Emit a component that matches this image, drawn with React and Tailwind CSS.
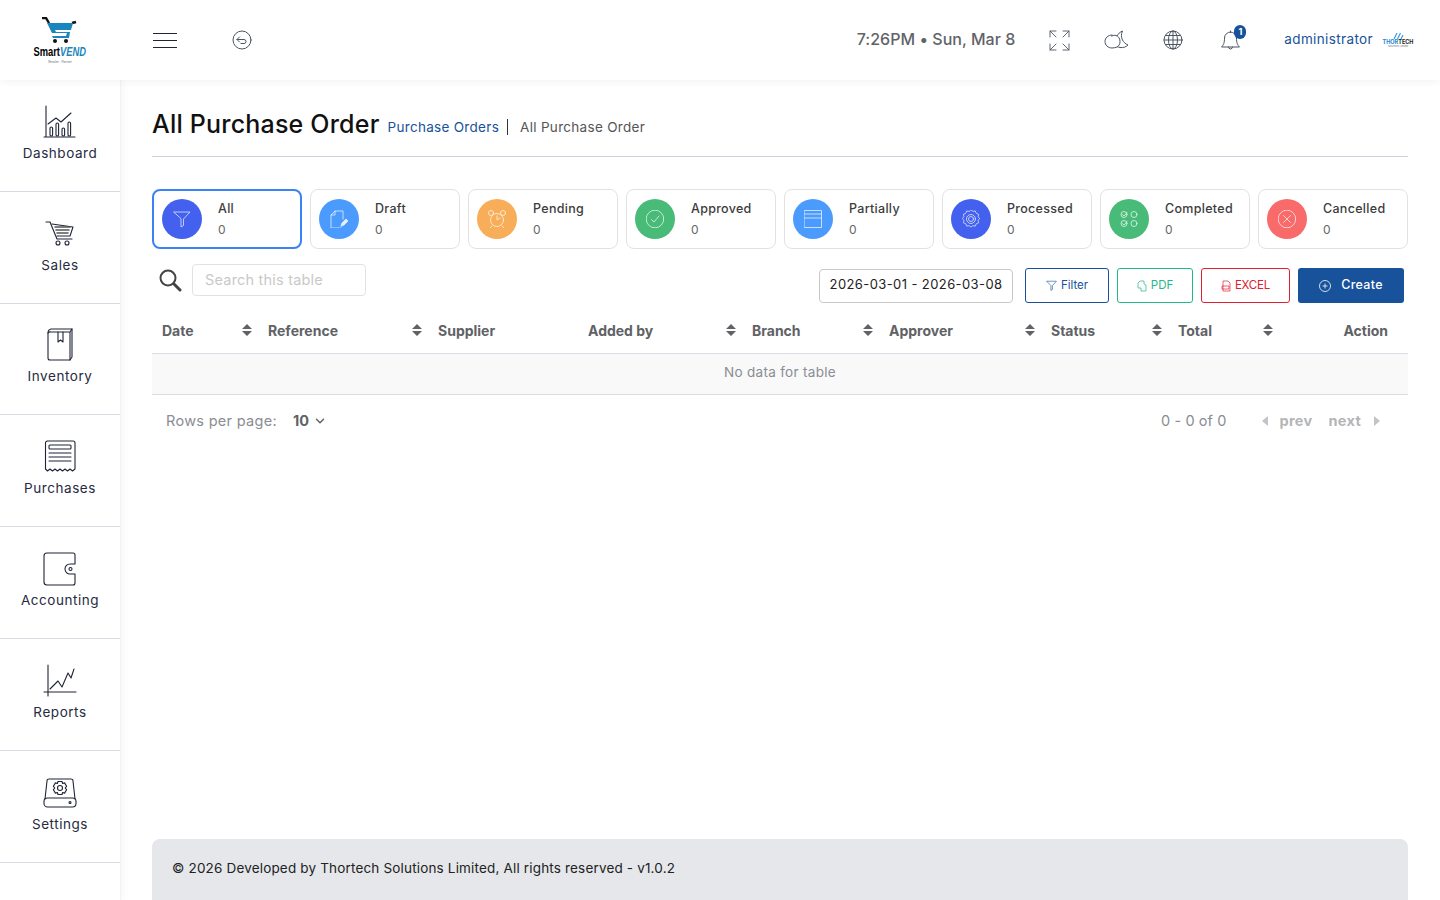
import { ChevronDown } from 'lucide-react'

const font = { fontFamily: 'Inter, "Noto Sans", sans-serif' }

const Logo = () => (
  <div className="flex w-[60px] flex-col items-center">
    <svg width="40" height="27" viewBox="0 0 40 27">
      <path d="M2 1h4l3 5" fill="none" stroke="#111" strokeWidth="2.4" />
      <path d="M36 5l-4 1" fill="none" stroke="#111" strokeWidth="2.4" />
      <path d="M7 6h26l-2 7H15l1 2h14l-1 6H13l-1-2h14l1-3H12z" fill="#1b86bd" />
      <circle cx="15" cy="24" r="2" fill="#111" />
      <circle cx="26" cy="24" r="2" fill="#111" />
    </svg>
    <div className="mt-[2px] flex h-[12px] scale-x-[0.78] items-center text-[12px] leading-none font-bold whitespace-nowrap" style={{ fontFamily: '"Liberation Sans", sans-serif' }}>
      <span className="text-black">Smart</span>
      <span className="text-[#1b86bd] italic">VEND</span>
    </div>
    <div className="mt-[3px] h-[3px] text-[3px] leading-none whitespace-nowrap text-gray-500">Retailer · Partner</div>
  </div>
)

const ThorLogo = () => (
  <div className="flex w-[34px] flex-col items-center">
    <svg width="11" height="7" viewBox="0 0 11 7">
      <path d="M1 7l3-6M4.500 7l3-6M8 7l2-4" stroke="#3b9ae1" strokeWidth="1.200" fill="none" />
    </svg>
    <div className="mt-[1px] flex text-[5.500px] leading-none font-bold">
      <span className="text-[#1b86d0]">THOR</span>
      <span className="text-[#222]">TECH</span>
    </div>
    <div className="mt-[1px] text-[2.500px] leading-none whitespace-nowrap text-gray-500">Solutions Limited</div>
  </div>
)

const line = { fill: 'none', stroke: '#1f2437', strokeWidth: 1.1, strokeLinecap: 'round', strokeLinejoin: 'round' }
const thin = { fill: 'none', stroke: '#4b5563', strokeWidth: 1, strokeLinecap: 'round', strokeLinejoin: 'round' }
const white = { fill: 'none', stroke: '#fff', strokeWidth: 0.8, strokeLinecap: 'round', strokeLinejoin: 'round', opacity: 0.85 }

const sideIcons = {
  Dashboard: (
    <svg width="34" height="34" viewBox="0 0 34 34" {...line}>
      <path d="M3 1v31M1 32h31" />
      <path d="M5 19l8-6 5 4 10-9" />
      <rect x="7" y="22" width="2.600" height="9" rx="1.300" />
      <rect x="13" y="18" width="2.600" height="13" rx="1.300" />
      <rect x="19" y="23" width="2.600" height="8" rx="1.300" />
      <rect x="25" y="17" width="2.600" height="14" rx="1.300" />
    </svg>
  ),
  Sales: (
    <svg width="34" height="34" viewBox="0 0 34 34" {...line}>
      <path d="M3 5h4l7 17h15" />
      <path d="M9 7l21 3-3 9H14" />
      <path d="M12 10h15M13 13h13M14 16h11" strokeWidth="1.600" stroke="#555" />
      <circle cx="15" cy="26" r="2" />
      <circle cx="24" cy="26" r="2" />
    </svg>
  ),
  Inventory: (
    <svg width="34" height="34" viewBox="0 0 34 34" {...line}>
      <path d="M8 1h21v28l-2 3H7a2 2 0 0 1-2-2V5a4 4 0 0 1 3-4z" />
      <path d="M27 4H8a3 3 0 0 0-3 1M27 4v28M29 1l-2 3" />
      <path d="M15 4v10l2.500-2 2.500 2V4" />
    </svg>
  ),
  Purchases: (
    <svg width="34" height="34" viewBox="0 0 34 34" {...line}>
      <path d="M4 1h26a2 2 0 0 1 2 2v26l-2.500 2-2.500-2-2.500 2-2.500-2-2.500 2-2.500-2-2.500 2-2.500-2-2.500 2-2.500-2-2.500 2-2-2V3a2 2 0 0 1 2-2z" />
      <rect x="6" y="5" width="22" height="4" rx="1" />
      <path d="M6 13h22M6 17h22M6 21h22" />
    </svg>
  ),
  Accounting: (
    <svg width="34" height="34" viewBox="0 0 34 34" {...line}>
      <path d="M4 1h26a2 2 0 0 1 2 2v9h-5a5 5 0 0 0 0 10h5v9a2 2 0 0 1-2 2H4a3 3 0 0 1-3-3V4a3 3 0 0 1 3-3z" />
      <circle cx="27.500" cy="17" r="1.500" />
    </svg>
  ),
  Reports: (
    <svg width="34" height="34" viewBox="0 0 34 34" {...line}>
      <path d="M5 1v31M1 28h32" />
      <path d="M7 25l8-8 4 6 6-14 3 5 3-9" />
    </svg>
  ),
  Settings: (
    <svg width="34" height="34" viewBox="0 0 34 34" {...line}>
      <path d="M6 3h22a2 2 0 0 1 2 2l2 18M6 3a2 2 0 0 0-2 2L2 23" />
      <rect x="1" y="22" width="32" height="9" rx="3.500" />
      <circle cx="27" cy="26.500" r="1" />
      <circle cx="17" cy="12" r="2.500" />
      <path d="M15 5.500h4l.6 2 2-.6 2 3.400-1.400 1.700 1.400 1.700-2 3.400-2-.6-.6 2h-4l-.6-2-2 .6-2-3.400 1.400-1.700-1.400-1.700 2-3.400 2 .6z" />
    </svg>
  ),
}

const sideItems = ['Dashboard', 'Sales', 'Inventory', 'Purchases', 'Accounting', 'Reports', 'Settings']

const cardIcons = {
  All: <path d="M1 2h16l-6.500 7v6.500L8 17V9z" />,
  Draft: (
    <>
      <path d="M13 9V1H5L1 5v13h10" />
      <path d="M5 1v4H1" />
      <path d="M11 16l1-3 4-4 2 2-4 4z" fill="#fff" />
    </>
  ),
  Pending: (
    <>
      <circle cx="9" cy="10" r="6.500" />
      <path d="M9 6v4l3-2M4 16l-2 2M14 16l2 2" />
      <circle cx="3" cy="3" r="2.500" />
      <circle cx="15" cy="3" r="2.500" />
    </>
  ),
  Approved: (
    <>
      <circle cx="9" cy="9" r="8.800" />
      <path d="M5.500 9.500l2.500 2.500 5-6" />
    </>
  ),
  Partially: (
    <>
      <rect x="0.500" y="0.500" width="17" height="17" />
      <path d="M0.500 4h17M0.500 8h17" />
    </>
  ),
  Processed: (
    <>
      <path d="M9 0.500l2 1.500 2.500-.5 1 2.500 2.500 1-.5 2.500 1.500 2-1.500 2 .5 2.500-2.500 1-1 2.500-2.500-.5-2 1.500-2-1.500-2.500.5-1-2.500-2.500-1 .5-2.500-1.500-2 1.500-2-.5-2.500 2.500-1 1-2.500 2.500.5z" transform="translate(0.500 -0.500) scale(0.95)" />
      <circle cx="9" cy="9" r="4.500" />
      <circle cx="9" cy="9" r="2.500" />
    </>
  ),
  Completed: (
    <>
      <circle cx="4" cy="4.500" r="3" />
      <circle cx="14" cy="4.500" r="3" />
      <circle cx="4" cy="13.500" r="3" />
      <circle cx="14" cy="13.500" r="3" />
      <path d="M2.500 4.500l1.500 1.500 3-3.500M2.500 13.500l1.500 1.500 3-3.500" />
    </>
  ),
  Cancelled: (
    <>
      <circle cx="9" cy="9" r="8.800" />
      <path d="M5.500 5.500l7 7M12.500 5.500l-7 7" />
    </>
  ),
}

const cards = [
  { name: 'All', bg: 'bg-[#4361ee]' },
  { name: 'Draft', bg: 'bg-[#4b9bff]' },
  { name: 'Pending', bg: 'bg-[#f8ae58]' },
  { name: 'Approved', bg: 'bg-[#48bb78]' },
  { name: 'Partially', bg: 'bg-[#4b9bff]' },
  { name: 'Processed', bg: 'bg-[#4361ee]' },
  { name: 'Completed', bg: 'bg-[#48bb78]' },
  { name: 'Cancelled', bg: 'bg-[#f96a6a]' },
]

const columns = [
  { name: 'Date', w: 'w-[106px]', sort: true },
  { name: 'Reference', w: 'w-[170px]', sort: true },
  { name: 'Supplier', w: 'w-[150px]' },
  { name: 'Added by', w: 'w-[164px]', sort: true },
  { name: 'Branch', w: 'w-[137px]', sort: true },
  { name: 'Approver', w: 'w-[162px]', sort: true },
  { name: 'Status', w: 'w-[127px]', sort: true },
  { name: 'Total', w: 'w-[111px]', sort: true },
]

const SortIcon = () => (
  <svg width="10" height="12" viewBox="0 0 10 12" fill="#606266">
    <path d="M5 0l5 5H0zM0 7h10l-5 5z" />
  </svg>
)

export default function App() {
  return (
    <div className="flex h-screen w-full flex-col overflow-hidden bg-white" style={font}>
      {/* header */}
      <header className="relative z-20 flex h-20 shrink-0 items-center bg-white pr-[25px] shadow-[0_1px_8px_rgba(0,0,0,0.06)]">
        <div className="flex w-[120px] justify-center">
          <Logo />
        </div>
        <div className="ml-[33px] flex h-[15px] w-6 flex-col justify-between">
          <div className="h-px bg-[#1f2437]" />
          <div className="h-px bg-[#1f2437]" />
          <div className="h-px bg-[#1f2437]" />
        </div>
        <svg className="ml-[55px]" width="20" height="20" viewBox="0 0 20 20" {...thin}>
          <circle cx="10" cy="10" r="9" />
          <path d="M7.500 7L5 9.500 7.500 12M5 9.500h7a2 2 0 0 1 0 4H9" />
        </svg>
        <div className="mb-[2px] ml-auto text-[16px] font-medium tracking-[0.03px] text-[#5f6368]">7:26PM • Sun, Mar 8</div>
        <svg className="ml-[34px]" width="21" height="21" viewBox="0 0 21 21" {...thin}>
          <path d="M1 7V1h6M1 1l6 6M14 1h6v6M20 1l-6 6M1 14v6h6M1 20l6-6M20 14v6h-6M20 20l-6-6" strokeWidth="0.9" />
        </svg>
        <svg className="ml-[34px]" width="25" height="20" viewBox="0 0 25 20" {...thin}>
          <path d="M13 6c1-2 3-4 5.500-5-1.500 3-1.500 6 0 9 1 2 3 4 5.500 5-2 2-5 3-8 2.500-1 0-2-.5-3-1" />
          <path d="M8 5c-4 0-7 3-7 6.500S4 18 8 18c2 0 3.500-.5 5-1 2-1 3-3 3-5.500 0-3.500-2-5.500-4-6-1.500-.5-3 0-4 .5z" fill="#fff" />
        </svg>
        <svg className="ml-[34px]" width="20" height="20" viewBox="0 0 20 20" {...thin}>
          <circle cx="10" cy="10" r="9" />
          <ellipse cx="10" cy="10" rx="4.500" ry="9" />
          <path d="M1 10h18M2.500 5.500h15M2.500 14.500h15M10 1v18" />
        </svg>
        <div className="relative ml-[37px] h-[20px] w-[20px]">
          <svg width="21" height="21" viewBox="0 0 21 21" {...thin}>
            <path d="M10.500 2a6 6 0 0 0-6 6c0 5-1 7-3 9h18c-2-2-3-4-3-9a6 6 0 0 0-6-6z" />
            <path d="M8.500 17a2 2 0 0 0 4 0M10.500 2V1" />
          </svg>
          <span className="absolute -top-[5px] left-[14px] flex h-[14px] w-[12px] items-center justify-center rounded-full bg-[#17529a] text-[9px] font-bold text-white">1</span>
        </div>
        <div className="mb-[2px] ml-[44px] text-[13.500px] tracking-[0.37px] text-[#17529a]">administrator</div>
        <div className="ml-[8px]">
          <ThorLogo />
        </div>
      </header>

      <div className="flex min-h-0 flex-1">
        {/* sidebar */}
        <aside className="z-10 w-[121px] shrink-0 border-r border-[#f3f3f5] bg-white shadow-[2px_0_8px_rgba(0,0,0,0.04)]">
          {sideItems.map((s) => (
            <div key={s} className="flex h-[111.8px] flex-col items-center justify-center border-b border-[#d9d9e3] pb-[3px]">
              {sideIcons[s]}
              <div className="mt-[4px] text-[13.500px] leading-5 tracking-[0.55px] text-[#262b40]">{s}</div>
            </div>
          ))}
        </aside>

        {/* main */}
        <main className="flex min-w-0 flex-1 flex-col pr-8 pl-[31px]">
          <div className="flex h-[77px] shrink-0 items-center border-b border-[#d0d0da] pt-[14px]">
            <h1 className="text-[25px] font-medium tracking-[0.2px] text-[#111]">All Purchase Order</h1>
            <span className="relative top-[2px] ml-2 border-r border-[#333] pr-2 text-[13.500px] leading-4 tracking-[0.3px] text-[#17529a]">Purchase Orders</span>
            <span className="relative top-[2px] ml-3 text-[13.500px] leading-4 tracking-[0.3px] text-[#555]">All Purchase Order</span>
          </div>

          {/* status cards */}
          <div className="mt-[32px] flex gap-2">
            {cards.map((c, i) => (
              <div key={c.name} className={`flex h-[60px] w-[150px] items-center rounded-lg bg-white pl-[8px] ${i === 0 ? 'border-2 border-[#3b82f6]' : 'border border-[#e2e2e2]'}`}>
                <div className={`flex h-10 w-10 shrink-0 items-center justify-center rounded-full ${c.bg}`}>
                  <svg width="18" height="18" viewBox="0 0 18 18" {...white}>{cardIcons[c.name]}</svg>
                </div>
                <div className="ml-4 pb-[1px]">
                  <div className="text-[12.500px] leading-5 font-medium tracking-[0.3px] text-[#3c3c3c]">{c.name}</div>
                  <div className="mt-[3px] text-[12px] leading-4 text-[#666]">0</div>
                </div>
              </div>
            ))}
          </div>

          {/* toolbar */}
          <div className="mt-[15px] flex items-start pr-1">
            <svg className="mt-[5px] ml-[7px]" width="23" height="23" viewBox="0 0 23 23" fill="none" stroke="#444" strokeLinecap="round">
              <circle cx="9" cy="9" r="7.500" strokeWidth="2" />
              <path d="M15 15l6 6" strokeWidth="3" />
            </svg>
            <input placeholder="Search this table" className="ml-[10px] h-8 w-[174px] rounded border border-[#e2e2e2] px-3 pb-[2px] text-[14.500px] tracking-[0.2px] outline-none placeholder:text-[#c9c9c9]" />
            <div className="mt-[5px] ml-auto flex h-[34px] w-[194px] items-center justify-center rounded border border-[#c8c8c8] pb-[3px] text-[13px] tracking-[0.4px] text-[#222]">2026-03-01 - 2026-03-08</div>
            <button className="mt-[4px] ml-3 flex h-[35px] w-[84px] items-center justify-center gap-1 rounded-[3px] border border-[#17529a] text-[11.500px] text-[#17529a]">
              <svg width="11" height="11" viewBox="0 0 18 18" fill="none" stroke="#17529a" strokeWidth="1"><path d="M1 2h16l-6.500 7v6.500L8 17V9z" /></svg>
              Filter
            </button>
            <button className="mt-[4px] ml-2 flex h-[35px] w-[76px] items-center justify-center gap-1 rounded-[3px] border border-[#1fb88a] text-[11.500px] text-[#1fb88a]">
              <svg width="10" height="12" viewBox="0 0 10 12" fill="none" stroke="#1fb88a" strokeWidth="0.7"><path d="M3 1h4v3l2 1v6H4V8H1V3z" /></svg>
              PDF
            </button>
            <button className="mt-[4px] ml-2 flex h-[35px] w-[89px] items-center justify-center gap-1 rounded-[3px] border border-[#e02030] text-[11.500px] tracking-[-0.2px] text-[#e02030]">
              <svg width="10" height="12" viewBox="0 0 10 12" fill="none" stroke="#e02030" strokeWidth="0.7"><path d="M2 1h5l2 2v8H2zM1 6h7v3H1z" /></svg>
              EXCEL
            </button>
            <button className="mt-[4px] ml-2 flex h-[35px] w-[106px] items-center justify-center gap-[10px] rounded-[3px] bg-[#17529a] text-[12.500px] font-medium tracking-[0.3px] text-white">
              <svg width="12" height="12" viewBox="0 0 12 12" fill="none" stroke="#fff" strokeWidth="0.8"><circle cx="6" cy="6" r="5.500" /><path d="M6 3.500v5M3.500 6h5" /></svg>
              Create
            </button>
          </div>

          {/* table */}
          <div className="mt-[6px] flex h-[45px] shrink-0 items-center border-b border-[#dcdce6] pb-[2px]">
            {columns.map((c) => (
              <div key={c.name} className={`flex ${c.w} shrink-0 items-center justify-between pr-[6px] pl-[10px] text-[14px] font-bold text-[#606266]`}>
                {c.name}
                {c.sort && <SortIcon />}
              </div>
            ))}
            <div className="flex-1 pr-5 text-right text-[14px] font-bold text-[#606266]">Action</div>
          </div>
          <div className="flex h-[41px] shrink-0 items-center justify-center border-b border-[#dcdce6] bg-[#f9f9f9] pb-[3px] text-[13.500px] tracking-[0.3px] text-[#8a8d93]">No data for table</div>

          {/* pagination */}
          <div className="mt-[15px] flex h-[22px] items-center pr-7 pl-[14px] text-[14.500px] text-[#8a8d93]">
            <span className="tracking-[0.3px]">Rows per page:</span>
            <span className="ml-[16px] font-bold text-[#606266]">10</span>
            <ChevronDown size={14} strokeWidth={2.5} className="ml-[4px] text-[#606266]" />
            <span className="ml-auto tracking-[0.1px]">0 - 0 of 0</span>
            <svg className="ml-[35px]" width="6" height="10" viewBox="0 0 6 10" fill="#c4c4c8"><path d="M6 0v10L0 5z" /></svg>
            <span className="ml-[12px] font-bold tracking-[0.3px] text-[#b5b5b8]">prev</span>
            <span className="ml-4 font-bold tracking-[0.3px] text-[#b5b5b8]">next</span>
            <svg className="ml-[13px]" width="6" height="10" viewBox="0 0 6 10" fill="#c4c4c8"><path d="M0 0v10l6-5z" /></svg>
          </div>

          {/* footer */}
          <footer className="mt-auto flex h-[61px] shrink-0 items-center rounded-t-lg bg-[#e5e7eb] pb-[3px] pl-5 text-[13.500px] tracking-[0.17px] text-[#222]">
            © 2026 Developed by Thortech Solutions Limited, All rights reserved - v1.0.2
          </footer>
        </main>
      </div>
    </div>
  )
}
